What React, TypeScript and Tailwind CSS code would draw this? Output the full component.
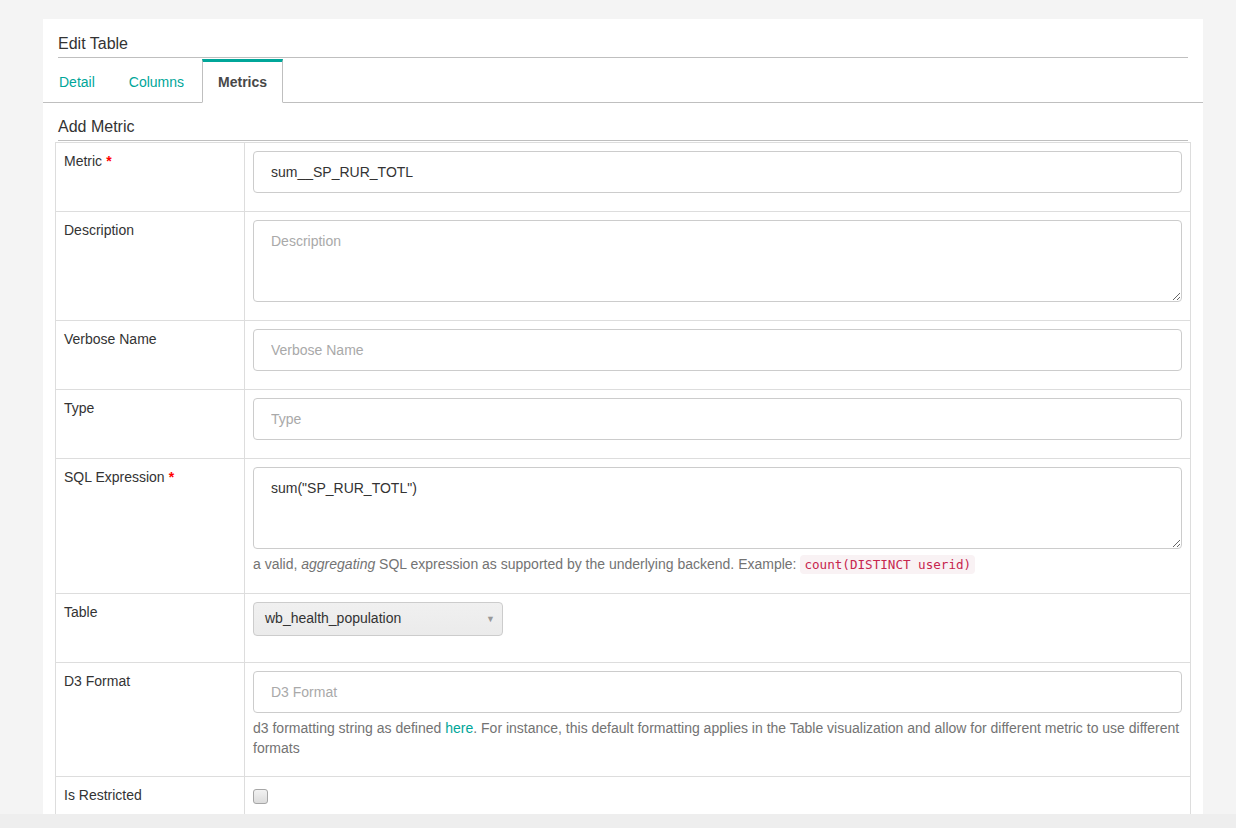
import React from "react";

const Req = () => <span className="text-[#ff0000] font-bold ml-[4px]">*</span>;

function Row({ label, required, children }: { label: string; required?: boolean; children: React.ReactNode }) {
  return (
    <div className="flex border-t border-[#dddddd]">
      <div className="w-[189px] shrink-0 border-r border-[#dddddd] pl-[8px] pt-[8px] pb-[18px] leading-[20px] text-[#333333]">
        {label}
        {required && <Req />}
      </div>
      <div className="flex-1 min-w-0 px-[8px] pt-[8px] pb-[18px]">{children}</div>
    </div>
  );
}

const inputCls =
  "block w-full h-[42px] border border-[#cccccc] rounded-[4px] px-[17px] text-[14px] text-[#333333] placeholder:text-[#a9a9a9] bg-white outline-none";
const areaCls =
  "block w-full h-[82px] border border-[#cccccc] rounded-[4px] px-[17px] py-[10px] leading-[20px] text-[14px] text-[#333333] placeholder:text-[#a9a9a9] bg-white outline-none resize-y";

export default function App() {
  return (
    <div
      className="h-[828px] w-[1236px] overflow-hidden flex flex-col bg-[#f4f4f4] text-[14px] text-[#484848]"
      style={{ fontFamily: '"Liberation Sans", Arial, Helvetica, sans-serif' }}
    >
      <div className="flex-1 min-h-0 pt-[19px]">
        <div className="ml-[43px] w-[1160px] h-full bg-white overflow-hidden">
          <div className="mx-[15px] pt-[14px] pb-[2px] border-b border-[#bfbfbf] text-[16px] leading-[22px] text-[#333333]">
            Edit Table
          </div>
          <div className="mt-[1px] flex border-b border-[#bfbfbf]">
            <a className="mr-[2px] border-t-[3px] border-transparent px-[16px] pt-[10px] pb-[10px] leading-[20px] text-[#00a699]">
              Detail
            </a>
            <a className="mr-[2px] border-t-[3px] border-transparent px-[16px] pt-[10px] pb-[10px] leading-[20px] text-[#00a699]">
              Columns
            </a>
            <a className="-mb-px border-t-[3px] border-t-[#00a699] border-x border-x-[#bfbfbf] border-b border-b-white bg-white px-[15px] pt-[10px] pb-[10px] leading-[20px] font-bold text-[#484848]">
              Metrics
            </a>
          </div>
          <div className="mx-[15px] pt-[13px] pb-[2px] border-b border-[#bfbfbf] text-[16px] leading-[22px] text-[#333333]">
            Add Metric
          </div>
          <div className="mx-[12px] mt-[1px] border-x border-b border-[#dddddd]">
            <Row label="Metric" required>
              <input className={inputCls} defaultValue="sum__SP_RUR_TOTL" />
            </Row>
            <Row label="Description">
              <textarea className={areaCls} placeholder="Description" />
            </Row>
            <Row label="Verbose Name">
              <input className={inputCls} placeholder="Verbose Name" />
            </Row>
            <Row label="Type">
              <input className={inputCls} placeholder="Type" />
            </Row>
            <Row label="SQL Expression" required>
              <textarea className={areaCls} defaultValue={'sum("SP_RUR_TOTL")'} />
              <div className="mt-[5px] leading-[20px] text-[#737373]">
                a valid, <i>aggregating</i> SQL expression as supported by the underlying backend. Example:{" "}
                <code
                  className="rounded-[4px] bg-[#f9f2f4] px-[4px] py-[2px] text-[12.6px] text-[#c7254e]"
                  style={{ fontFamily: '"DejaVu Sans Mono", "Liberation Mono", monospace' }}
                >
                  count(DISTINCT userid)
                </code>
              </div>
            </Row>
            <Row label="Table">
              <div className="h-[42px]">
                <div className="relative flex h-[34px] w-[250px] items-center rounded-[4px] border border-[#cccccc] bg-gradient-to-b from-[#f0f0f0] to-[#ebebeb] pl-[11px] pb-[2px] text-[#333333]">
                  wb_health_population
                  <span className="absolute right-[7px] top-[9px] text-[9px] leading-[14px] text-[#999999]">▼</span>
                </div>
              </div>
            </Row>
            <Row label="D3 Format">
              <input className={inputCls} placeholder="D3 Format" />
              <div className="mt-[5px] leading-[20px] text-[#737373]">
                d3 formatting string as defined <a className="text-[#00a699]">here</a>. For instance, this default
                formatting applies in the Table visualization and allow for different metric to use different formats
              </div>
            </Row>
            <Row label="Is Restricted">
              <div className="mt-[4px] h-[15px] w-[15px] rounded-[3px] border border-[#a6a6a6] bg-gradient-to-b from-[#f2f2f2] to-[#dcdcdc]" />
            </Row>
          </div>
        </div>
      </div>
      <div className="h-[14px] shrink-0 bg-[#eeeeee]" />
    </div>
  );
}
